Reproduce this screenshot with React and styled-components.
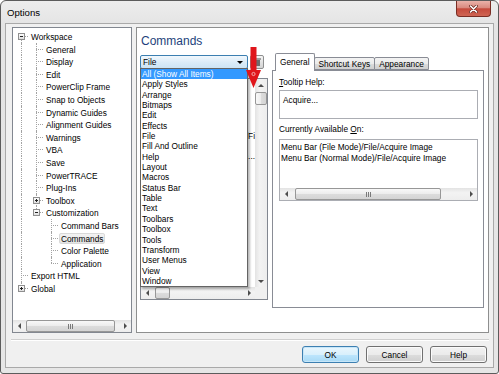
import React from "react";
import styled, { createGlobalStyle } from "styled-components";

const GlobalStyle = createGlobalStyle`
  html, body { margin: 0; padding: 0; }
  body {
    width: 499px;
    height: 374px;
    overflow: hidden;
    background: #fff;
    font-family: "Liberation Sans", Arial, sans-serif;
    font-size: 8.3px;
    color: #000;
  }
  * { box-sizing: border-box; }
`;

const Window = styled.div`
  width: 499px;
  height: 374px;
  border: 1px solid #5c5c5c;
  border-radius: 6px 6px 3px 3px;
  background: linear-gradient(#ededed, #e4e4e4 24px, #e6e6e6);
  padding: 0 4px 5px 4px;
  display: flex;
  flex-direction: column;
`;

const TitleBar = styled.div`
  height: 22px;
  flex: none;
  display: flex;
  align-items: flex-start;
  justify-content: space-between;
`;

const Title = styled.span`
  font-size: 9.6px;
  line-height: 12px;
  padding: 6px 0 0 2px;
`;

const CloseButton = styled.div`
  width: 35px;
  height: 16px;
  margin-right: 3px;
  border: 1px solid #7a2d24;
  border-top: none;
  border-radius: 0 0 4px 4px;
  background: linear-gradient(#eab2a9, #d98a7f 45%, #c54a3c 52%, #cf6553);
  display: flex;
  align-items: center;
  justify-content: center;
`;

const Client = styled.div`
  flex: 1;
  border: 1px solid #a9a9a9;
  background: #f0f0f0;
  display: flex;
  flex-direction: column;
`;

const Panels = styled.div`
  display: flex;
  gap: 4px;
  padding: 3px 4px 0 6px;
`;

const TreePanel = styled.div`
  width: 120px;
  height: 306px;
  flex: none;
  border: 1px solid #828790;
  background: #fff;
  display: flex;
  flex-direction: column;
`;

const TreeList = styled.div`
  flex: 1;
  padding-top: 2px;
`;

const TreeRow = styled.div`
  display: flex;
  height: 12.6px;
  line-height: 12.6px;
  white-space: nowrap;
`;

const Cell = styled.span`
  position: relative;
  width: 15px;
  flex: none;
  &::before {
    content: "";
    display: ${(p) => (p.$up || p.$down ? "block" : "none")};
    position: absolute;
    left: 8px;
    top: ${(p) => (p.$up ? "0" : "50%")};
    bottom: ${(p) => (p.$down ? "0" : "50%")};
    border-left: 1px dotted #a3a3a3;
  }
  &::after {
    content: "";
    display: ${(p) => (p.$conn ? "block" : "none")};
    position: absolute;
    left: 8px;
    right: 0;
    top: 6px;
    border-top: 1px dotted #a3a3a3;
  }
`;

const Expander = styled.svg`
  position: absolute;
  left: 5px;
  top: 3px;
  z-index: 1;
`;

const TreeLabel = styled.span`
  margin-left: 1px;
  padding: 0 1px;
  height: 11px;
  line-height: 11px;
  margin-top: 1px;
  border: 1px solid ${(p) => (p.$selected ? "#d9d9d9" : "transparent")};
  border-radius: 2px;
  background: ${(p) => (p.$selected ? "linear-gradient(#f3f3f3, #e3e3e3)" : "none")};
`;

const MainPanel = styled.div`
  flex: 1;
  height: 306px;
  border: 1px solid #8e8f8f;
  background: #fff;
  display: flex;
  flex-direction: column;
`;

const Heading = styled.h2`
  margin: 0;
  height: 25px;
  padding: 6px 0 0 4px;
  font-family: "Liberation Sans", Arial, sans-serif;
  font-weight: normal;
  font-size: 12px;
  line-height: 14px;
  color: #1e3f7b;
`;

const Content = styled.div`
  display: flex;
  gap: 4px;
  padding: 0 4px 0 3px;
`;

const LeftColumn = styled.div`
  width: 128px;
  flex: none;
  display: flex;
  flex-direction: column;
`;

const ComboRow = styled.div`
  position: relative;
  margin-top: 2px;
  display: flex;
  gap: 2px;
  height: 14px;
`;

const Combo = styled.div`
  width: 108px;
  height: 14px;
  border: 1px solid #3c7fb1;
  border-radius: 2px;
  background: linear-gradient(#f1f8fd, #dcecf8 50%, #cde4f5);
  display: flex;
  align-items: center;
  justify-content: space-between;
  padding: 0 4px 0 2px;
  line-height: 12px;
`;

const SmallButton = styled.div`
  width: 14px;
  height: 14px;
  border: 1px solid #8e8f8f;
  border-radius: 2px;
  background: linear-gradient(#f6f6f6, #e3e3e3 50%, #d4d4d4);
  display: flex;
  align-items: center;
  justify-content: center;
`;

const RedArrow = styled.svg`
  position: absolute;
  left: 106px;
  top: -8px;
  z-index: 3;
`;

const Dropdown = styled.div`
  position: absolute;
  left: 0;
  top: 13px;
  width: 108px;
  z-index: 2;
  border: 1px solid #646464;
  background: #fff;
  box-shadow: 2px 2px 2px rgba(0, 0, 0, 0.28);
`;

const DropItem = styled.div`
  height: 10.35px;
  line-height: 10.35px;
  padding-left: 1px;
  white-space: nowrap;
  background: ${(p) => (p.$active ? "#3399ff" : "transparent")};
  color: ${(p) => (p.$active ? "#fff" : "#000")};
`;

const ListBox = styled.div`
  margin-top: 9px;
  height: 222px;
  border: 1px solid #828790;
  background: #fff;
  display: grid;
  grid-template-columns: 1fr 12px;
  grid-template-rows: 1fr 12px;
`;

const ListContent = styled.div`
  overflow: hidden;
  padding-top: 0;
`;

const ListRow = styled.div`
  height: 10.35px;
  line-height: 10.35px;
  display: flex;
  justify-content: flex-end;
  white-space: nowrap;
  overflow: hidden;
`;

const Corner = styled.div`
  background: #f0f0f0;
`;

const TabColumn = styled.div`
  flex: 1;
  display: flex;
  flex-direction: column;
`;

const TabStrip = styled.div`
  height: 17px;
  display: flex;
  align-items: flex-end;
  padding-left: 3px;
`;

const Tab = styled.div`
  height: ${(p) => (p.$active ? "18px" : "13px")};
  margin-bottom: ${(p) => (p.$active ? "-1px" : "0")};
  margin-left: ${(p) => (p.$first ? "0" : "-1px")};
  position: relative;
  z-index: ${(p) => (p.$active ? 1 : 0)};
  padding: ${(p) => (p.$active ? "3px 4px 0" : "1px 4px 0")};
  border: 1px solid #898c95;
  border-bottom: ${(p) => (p.$active ? "none" : "1px solid #898c95")};
  border-radius: 2px 2px 0 0;
  background: ${(p) => (p.$active ? "#fff" : "linear-gradient(#f3f3f3, #ebebeb 50%, #dddddd 51%, #cfcfcf)")};
  line-height: 10px;
  white-space: nowrap;
`;

const TabBody = styled.div`
  height: 238px;
  border: 1px solid #898c95;
  background: #fff;
  padding: 6px 5px 0 6px;
  display: flex;
  flex-direction: column;
`;

const FieldLabel = styled.div`
  line-height: 11px;
  margin-top: ${(p) => p.$gap || 0}px;
  u { text-decoration: underline; }
`;

const TextBox = styled.div`
  width: 199px;
  height: ${(p) => p.$height}px;
  margin-top: ${(p) => p.$gap}px;
  border: 1px solid #abadb3;
  background: #fff;
  display: flex;
  flex-direction: column;
`;

const BoxText = styled.div`
  flex: 1;
  padding: ${(p) => p.$pad};
  line-height: 10.5px;
  white-space: nowrap;
`;

const ScrollBar = styled.div`
  display: flex;
  flex-direction: ${(p) => (p.$vertical ? "column" : "row")};
  ${(p) => (p.$vertical ? "width: 12px;" : "height: 12px;")}
  flex: none;
  background: ${(p) =>
    p.$vertical
      ? "linear-gradient(to right, #e3e3e3, #f3f3f3 40%, #ededed)"
      : "linear-gradient(#e3e3e3, #f3f3f3 40%, #ededed)"};
`;

const ArrowCell = styled.span`
  width: 12px;
  height: 12px;
  flex: none;
  display: flex;
  align-items: center;
  justify-content: center;
`;

const Track = styled.div`
  flex: 1;
  display: flex;
  flex-direction: ${(p) => (p.$vertical ? "column" : "row")};
  align-items: stretch;
  padding: 0;
`;

const Thumb = styled.div`
  ${(p) =>
    p.$vertical
      ? `margin-top: ${p.$offset}px; height: ${p.$size}px; margin-left: 0;`
      : `margin-left: ${p.$offset}px; width: ${p.$size}px; margin-top: 0;`}
  flex: none;
  border: 1px solid #979797;
  border-radius: 2px;
  background: ${(p) =>
    p.$vertical
      ? "linear-gradient(to right, #f8f8f8, #ececec 50%, #dcdcdc 51%, #d4d4d4)"
      : "linear-gradient(#f8f8f8, #ececec 50%, #dcdcdc 51%, #d4d4d4)"};
  display: flex;
  align-items: center;
  justify-content: center;
`;

const Separator = styled.div`
  margin: 6px 4px 0 5px;
  border-top: 1px solid #cfcfcf;
  border-bottom: 1px solid #fff;
`;

const ButtonRow = styled.div`
  display: flex;
  justify-content: flex-end;
  gap: 7px;
  margin-top: 5px;
  padding-right: 6px;
`;

const Button = styled.button`
  width: 57px;
  height: 17px;
  padding: 0;
  font-family: inherit;
  font-size: 8.3px;
  color: #000;
  border-radius: 3px;
  border: 1px solid ${(p) => (p.$default ? "#3c7fb1" : "#707070")};
  background: ${(p) =>
    p.$default
      ? "linear-gradient(#eaf6fd, #d9f0fc 50%, #bee6fd 51%, #a7d9f5)"
      : "linear-gradient(#f2f2f2, #ebebeb 50%, #dddddd 51%, #cfcfcf)"};
  box-shadow: ${(p) => (p.$default ? "inset 0 0 0 1px #c7e6f8" : "inset 0 0 0 1px #fbfbfb")};
`;

const Arrow = ({ dir }) => {
  const pts = {
    left: "3,0 3,6 0,3",
    right: "0,0 0,6 3,3",
    up: "0,3 6,3 3,0",
    down: "0,0 6,0 3,3",
  }[dir];
  const horiz = dir === "left" || dir === "right";
  return (
    <svg width={horiz ? 3 : 6} height={horiz ? 6 : 3} viewBox={horiz ? "0 0 3 6" : "0 0 6 3"}>
      <polygon points={pts} fill="#4d4d4d" />
    </svg>
  );
};

const Grip = ({ vertical }) =>
  vertical ? (
    <svg width="5" height="5">
      <path d="M0 0.5H5M0 2.5H5M0 4.5H5" stroke="#7a7a7a" strokeWidth="1" />
    </svg>
  ) : (
    <svg width="5" height="5">
      <path d="M0.5 0V5M2.5 0V5M4.5 0V5" stroke="#7a7a7a" strokeWidth="1" />
    </svg>
  );

const Scroller = ({ vertical, offset, size }) => (
  <ScrollBar $vertical={vertical}>
    <ArrowCell>
      <Arrow dir={vertical ? "up" : "left"} />
    </ArrowCell>
    <Track $vertical={vertical}>
      <Thumb $vertical={vertical} $offset={offset} $size={size}>
        {size > 20 && <Grip vertical={vertical} />}
      </Thumb>
    </Track>
    <ArrowCell>
      <Arrow dir={vertical ? "down" : "right"} />
    </ArrowCell>
  </ScrollBar>
);

const tree = [
  {
    label: "Workspace",
    open: true,
    children: [
      { label: "General" },
      { label: "Display" },
      { label: "Edit" },
      { label: "PowerClip Frame" },
      { label: "Snap to Objects" },
      { label: "Dynamic Guides" },
      { label: "Alignment Guides" },
      { label: "Warnings" },
      { label: "VBA" },
      { label: "Save" },
      { label: "PowerTRACE" },
      { label: "Plug-Ins" },
      { label: "Toolbox", closed: true },
      {
        label: "Customization",
        open: true,
        children: [
          { label: "Command Bars" },
          { label: "Commands", selected: true },
          { label: "Color Palette" },
          { label: "Application" },
        ],
      },
    ],
  },
  { label: "Export HTML" },
  { label: "Global", closed: true },
];

function flatten(nodes, depth, lines, out) {
  nodes.forEach((n, i) => {
    const hasNext = i < nodes.length - 1;
    out.push({ ...n, depth, lines, hasNext, isFirstRoot: depth === 0 && i === 0 });
    if (n.open && n.children) flatten(n.children, depth + 1, [...lines, hasNext], out);
  });
  return out;
}

const rows = flatten(tree, 0, [], []);

const ExpandBox = ({ open }) => (
  <Expander width="7" height="7" viewBox="0 0 7 7">
    <defs>
      <linearGradient id="bx" x1="0" y1="0" x2="0" y2="1">
        <stop offset="0" stopColor="#ffffff" />
        <stop offset="1" stopColor="#dcdcdc" />
      </linearGradient>
    </defs>
    <rect x="0.5" y="0.5" width="6" height="6" fill="url(#bx)" stroke="#8f8f8f" />
    <path d="M2 3.5H5" stroke="#222" />
    {!open && <path d="M3.5 2V5" stroke="#222" />}
  </Expander>
);

const dropItems = [
  "All (Show All Items)",
  "Apply Styles",
  "Arrange",
  "Bitmaps",
  "Edit",
  "Effects",
  "File",
  "Fill And Outline",
  "Help",
  "Layout",
  "Macros",
  "Status Bar",
  "Table",
  "Text",
  "Toolbars",
  "Toolbox",
  "Tools",
  "Transform",
  "User Menus",
  "View",
  "Window",
];

const listRows = ["", "", "", "", "", "Menu Bar (File Mode)/Fi", "", "Acquire Image...", "", ""];

export default function App() {
  return (
    <>
      <GlobalStyle />
      <Window>
        <TitleBar>
          <Title>Options</Title>
          <CloseButton>
            <svg width="9" height="8" viewBox="0 0 9 8">
              <path d="M1.5 1L7.5 7M7.5 1L1.5 7" stroke="#6b2a22" strokeWidth="3" strokeLinecap="round" />
              <path d="M1.5 1L7.5 7M7.5 1L1.5 7" stroke="#fff" strokeWidth="1.6" strokeLinecap="round" />
            </svg>
          </CloseButton>
        </TitleBar>
        <Client>
          <Panels>
            <TreePanel>
              <TreeList>
                {rows.map((r) => (
                  <TreeRow key={r.label}>
                    {r.lines.map((l, i) => (
                      <Cell key={i} $up={l} $down={l} />
                    ))}
                    <Cell $up={!r.isFirstRoot} $down={r.hasNext} $conn>
                      {(r.open || r.closed) && <ExpandBox open={r.open} />}
                    </Cell>
                    <TreeLabel $selected={r.selected}>{r.label}</TreeLabel>
                  </TreeRow>
                ))}
              </TreeList>
              <Scroller offset={1} size={89} />
            </TreePanel>

            <MainPanel>
              <Heading>Commands</Heading>
              <Content>
                <LeftColumn>
                  <ComboRow>
                    <Combo>
                      <span>File</span>
                      <svg width="6" height="3" viewBox="0 0 6 3">
                        <polygon points="0,0 6,0 3,3" fill="#000" />
                      </svg>
                    </Combo>
                    <SmallButton>
                      <svg width="7" height="8" viewBox="0 0 7 8">
                        <rect x="1" y="2" width="5" height="6" fill="#6d6d6d" />
                        <rect x="0" y="0.5" width="7" height="1" fill="#555" />
                      </svg>
                    </SmallButton>
                    <RedArrow width="15" height="42" viewBox="0 0 15 42">
                      <rect x="4.5" y="0" width="6" height="26" fill="#e0161c" />
                      <polygon points="0,23 15,23 7.5,41" fill="#e0161c" />
                      <circle cx="7.5" cy="27" r="1.6" fill="none" stroke="#f5c6c6" strokeWidth="0.8" />
                    </RedArrow>
                    <Dropdown>
                      {dropItems.map((d, i) => (
                        <DropItem key={d} $active={i === 0}>
                          {d}
                        </DropItem>
                      ))}
                    </Dropdown>
                  </ComboRow>
                  <ListBox>
                    <ListContent>
                      {listRows.map((t, i) => (
                        <ListRow key={i}>{t}</ListRow>
                      ))}
                    </ListContent>
                    <Scroller vertical offset={1} size={13} />
                    <Scroller offset={2} size={15} />
                    <Corner />
                  </ListBox>
                </LeftColumn>

                <TabColumn>
                  <TabStrip>
                    <Tab $active $first>General</Tab>
                    <Tab>Shortcut Keys</Tab>
                    <Tab>Appearance</Tab>
                  </TabStrip>
                  <TabBody>
                    <FieldLabel>
                      <u>T</u>ooltip Help:
                    </FieldLabel>
                    <TextBox $height={29} $gap={2}>
                      <BoxText $pad="4px 3px 0">Acquire...</BoxText>
                    </TextBox>
                    <FieldLabel $gap={5}>
                      Currently Available <u>O</u>n:
                    </FieldLabel>
                    <TextBox $height={62} $gap={4}>
                      <BoxText $pad="2px 1px 0">
                        Menu Bar (File Mode)/File/Acquire Image
                        <br />
                        Menu Bar (Normal Mode)/File/Acquire Image
                      </BoxText>
                      <Scroller offset={3} size={146} />
                    </TextBox>
                  </TabBody>
                </TabColumn>
              </Content>
            </MainPanel>
          </Panels>
          <Separator />
          <ButtonRow>
            <Button $default>OK</Button>
            <Button>Cancel</Button>
            <Button>Help</Button>
          </ButtonRow>
        </Client>
      </Window>
    </>
  );
}
